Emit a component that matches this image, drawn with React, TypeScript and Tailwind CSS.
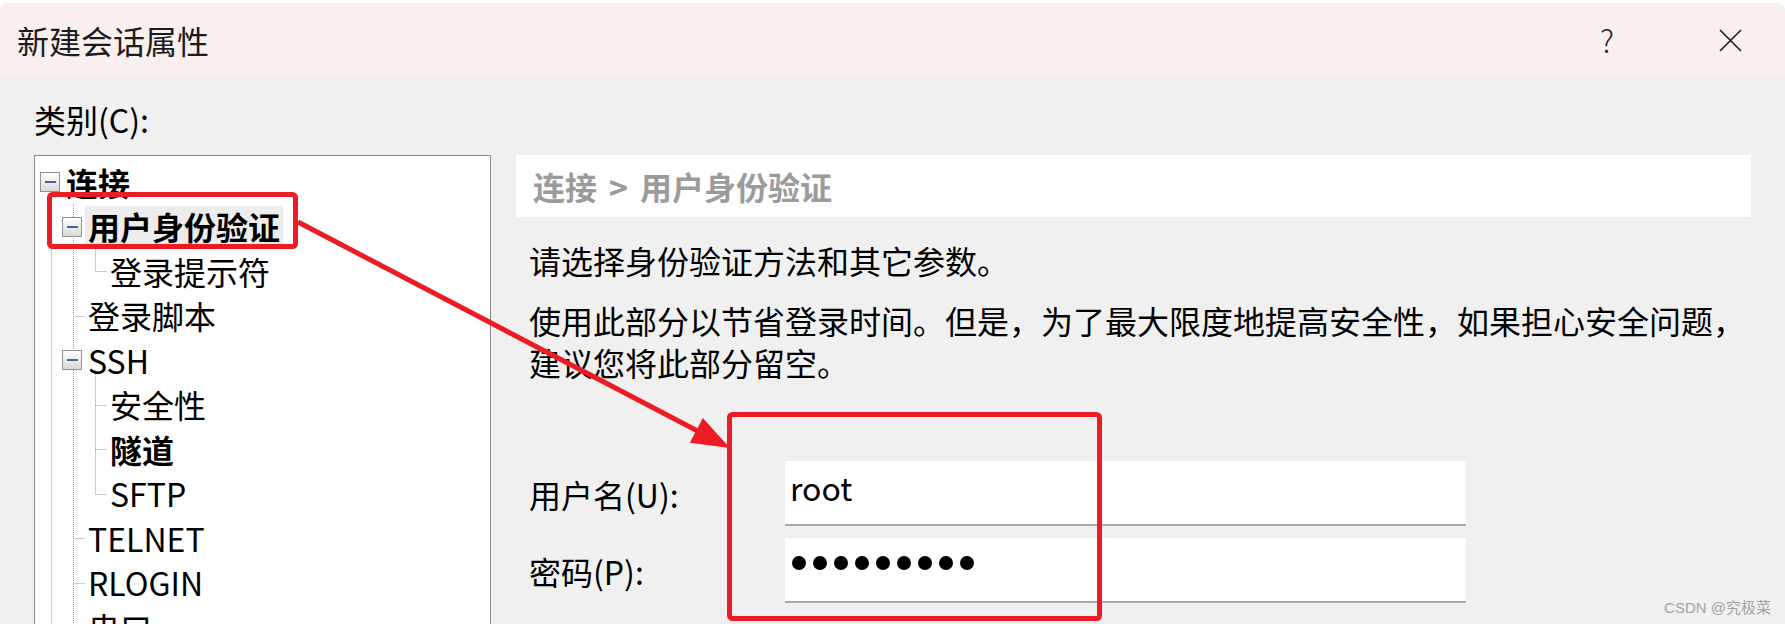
import React from "react";

interface TreeRow {
  label: string;
  level: 0 | 1 | 2;
  box?: boolean;
  bold?: boolean;
  hl?: boolean;
}

const rows: TreeRow[] = [
  { label: "连接", level: 0, box: true, bold: true },
  { label: "用户身份验证", level: 1, box: true, bold: true, hl: true },
  { label: "登录提示符", level: 2 },
  { label: "登录脚本", level: 1 },
  { label: "SSH", level: 1, box: true },
  { label: "安全性", level: 2 },
  { label: "隧道", level: 2, bold: true },
  { label: "SFTP", level: 2 },
  { label: "TELNET", level: 1 },
  { label: "RLOGIN", level: 1 },
  { label: "串口", level: 1 },
  { label: "代理", level: 1 },
];

const indent = { 0: "w-[5px]", 1: "w-[27px]", 2: "w-[49px]" };

const ROW_H = 44.5;
const PAD_TOP = 4;
const rowCenter = (i: number) => PAD_TOP + ROW_H * i + ROW_H / 2;

function MinusBox() {
  return (
    <span className="flex h-[20px] w-[20px] items-center justify-center border border-[#919191] bg-gradient-to-b from-white to-[#dadada]">
      <span className="h-[2px] w-[11px] bg-[#4a5fa8]" />
    </span>
  );
}

function TreeLines() {
  const dot = { stroke: "#9a9a9a", strokeWidth: 1, strokeDasharray: "1 1" };
  return (
    <svg className="pointer-events-none absolute left-0 top-0" width="460" height="520">
      <line x1="16.5" y1={rowCenter(0) + 10} x2="16.5" y2="520" {...dot} />
      <line x1="38.5" y1="48" x2="38.5" y2="520" {...dot} />
      <line x1="60.5" y1={rowCenter(1) + 10} x2="60.5" y2={rowCenter(2)} {...dot} />
      <line x1="60.5" y1={rowCenter(4) + 10} x2="60.5" y2={rowCenter(7)} {...dot} />
      {rows.map((r, i) =>
        r.box ? null : (
          <line
            key={i}
            x1={r.level === 1 ? 38.5 : 60.5}
            y1={Math.round(rowCenter(i)) + 0.5}
            x2={r.level === 1 ? 50 : 72}
            y2={Math.round(rowCenter(i)) + 0.5}
            {...dot}
          />
        )
      )}
    </svg>
  );
}

function Annotations() {
  // 红色标注框与箭头
  const red = "#ed1c24";
  const sx = 298, sy = 222, tx = 730, ty = 448;
  const dx = tx - sx, dy = ty - sy;
  const len = Math.hypot(dx, dy);
  const ux = dx / len, uy = dy / len;
  const bx = tx - ux * 38, by = ty - uy * 38;
  const px = -uy, py = ux;
  const head = `${tx},${ty} ${bx + px * 14},${by + py * 14} ${bx - px * 14},${by - py * 14}`;
  return (
    <svg className="pointer-events-none absolute left-0 top-0" width="1785" height="624">
      <rect x="49.5" y="194.5" width="246" height="52" rx="3" fill="none" stroke={red} strokeWidth="5" />
      <rect x="729.5" y="414.5" width="370" height="204" rx="3" fill="none" stroke={red} strokeWidth="5" />
      <line x1={sx} y1={sy} x2={bx + ux * 2} y2={by + uy * 2} stroke={red} strokeWidth="5" />
      <polygon points={head} fill={red} />
    </svg>
  );
}

export default function App() {
  return (
    <div className="relative h-[624px] w-[1785px] overflow-hidden bg-white font-['Noto_Sans_CJK_SC',sans-serif] text-black">
      <div className="mt-[3px] h-[621px] overflow-hidden rounded-t-[8px] bg-[#f0f0f0]">
        <div className="flex h-[74px] items-center bg-[#f9efee] pl-[17px] pr-[43px]">
          <span className="text-[32px] leading-[40px] text-[#1c1c1c]">新建会话属性</span>
          <div className="ml-auto flex items-center gap-[105px]">
            <span className="text-[31px] font-light leading-[40px] text-[#1c1c1c]">?</span>
            <svg width="23" height="23" viewBox="0 0 23 23">
              <path d="M1 1 L22 22 M22 1 L1 22" stroke="#1c1c1c" strokeWidth="1.6" />
            </svg>
          </div>
        </div>

        <div className="px-[34px] pt-[22px]">
          <div className="text-[32px] leading-[40px]">类别(C):</div>

          <div className="mt-[16px] flex gap-[25px]">
            <div className="h-[500px] w-[457px] shrink-0 border border-[#8c8c8c] bg-white">
              <div className="relative h-full pt-[4px]">
                <TreeLines />
                {rows.map((r, i) => (
                  <div key={i} className="relative flex h-[44.5px] items-center">
                    <span className={indent[r.level]} />
                    <span className="flex w-[21px] justify-start">{r.box && <MinusBox />}</span>
                    <span
                      className={
                        "whitespace-nowrap text-[32px] leading-[41px] " +
                        (r.bold ? "font-bold " : "") +
                        (r.hl ? "ml-[2px] bg-[#ececec] px-[3px]" : "ml-[5px]")
                      }
                    >
                      {r.label}
                    </span>
                  </div>
                ))}
              </div>
            </div>

            <div className="w-[1244px]">
              <div className="flex h-[62px] items-center bg-white pl-[17px] text-[32px] font-bold text-[#9b9b9b]">
                连接<span className="px-[12px]">&gt;</span>用户身份验证
              </div>
              <div className="pl-[13px]">
                <p className="mt-[22px] text-[32px] leading-[42px]">请选择身份验证方法和其它参数。</p>
                <p className="mt-[18px] whitespace-nowrap text-[32px] leading-[42px]">
                  使用此部分以节省登录时间。但是，为了最大限度地提高安全性，如果担心安全问题，
                  <br />
                  建议您将此部分留空。
                </p>

                <div className="mt-[78px] flex flex-col gap-[12px]">
                  <div className="flex items-center">
                    <label className="w-[256px] text-[32px] leading-[40px]">用户名(U):</label>
                    <div className="h-[65px] w-[681px] border-b-2 border-[#a8a8a8] bg-white pl-[5px] pt-[6px]">
                      <span className="text-[32px] leading-[40px]">root</span>
                    </div>
                  </div>
                  <div className="flex items-center">
                    <label className="w-[256px] text-[32px] leading-[40px]">密码(P):</label>
                    <div className="flex h-[65px] w-[681px] items-start gap-[7px] border-b-2 border-[#a8a8a8] bg-white pl-[7px] pt-[18px]">
                      {Array.from({ length: 9 }).map((_, i) => (
                        <span key={i} className="h-[14px] w-[14px] rounded-full bg-black" />
                      ))}
                    </div>
                  </div>
                </div>
              </div>
            </div>
          </div>
        </div>
      </div>

      <div className="absolute bottom-[6px] right-[14px] font-['Liberation_Sans','Noto_Sans_CJK_SC',sans-serif] text-[15px] leading-[20px] text-[#a3a3a3]">
        CSDN @究极菜
      </div>
      <Annotations />
    </div>
  );
}
